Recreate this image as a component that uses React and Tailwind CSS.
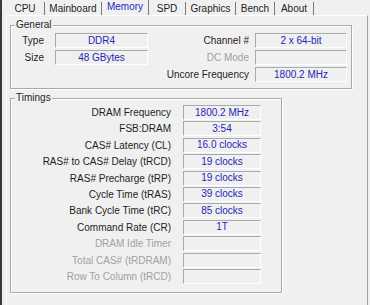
const tabs = [
  { name: "CPU", w: "w-[39px]" },
  { name: "Mainboard", w: "w-[57px]" },
  { name: "Memory", w: "w-[47px]", active: true },
  { name: "SPD", w: "w-[37px]" },
  { name: "Graphics", w: "w-[50px]" },
  { name: "Bench", w: "w-[39px]" },
  { name: "About", w: "w-[39px]" },
];

const timings = [
  ["DRAM Frequency", "1800.2 MHz"],
  ["FSB:DRAM", "3:54"],
  ["CAS# Latency (CL)", "16.0 clocks"],
  ["RAS# to CAS# Delay (tRCD)", "19 clocks"],
  ["RAS# Precharge (tRP)", "19 clocks"],
  ["Cycle Time (tRAS)", "39 clocks"],
  ["Bank Cycle Time (tRC)", "85 clocks"],
  ["Command Rate (CR)", "1T"],
  ["DRAM Idle Timer", null],
  ["Total CAS# (tRDRAM)", null],
  ["Row To Column (tRCD)", null],
];

function ValueBox({ value, className = "" }) {
  return (
    <div
      className={
        "h-[15px] flex items-center justify-center border border-t-[#a9a9a9] border-l-[#a9a9a9] border-b-white border-r-white bg-[#f0f0f0] text-[#2626b4] leading-none " +
        className
      }
    >
      {value}
    </div>
  );
}

function Group({ title, className = "", children }) {
  return (
    <fieldset
      className={
        "border border-[#a9a9a9] shadow-[inset_1px_1px_0_#ffffff,1px_1px_0_#ffffff] " +
        className
      }
    >
      <legend className="ml-[4px] px-[1px] leading-[12px] bg-[#f0f0f0] text-[#1e1e1e]">
        {title}
      </legend>
      {children}
    </fieldset>
  );
}

export default function App() {
  return (
    <div className="w-[370px] h-[305px] bg-[#f0f0f0] flex overflow-hidden font-['Liberation_Sans',Arial,sans-serif] text-[10px] leading-[15px] text-[#1e1e1e]">
      <div className="w-[2px] bg-[#3a3a3a]" />
      <div className="flex-1 flex flex-col pl-[4px] pr-[2px]">
        <div className="h-[15px] flex items-end">
          {tabs.map((tab) => (
            <div
              key={tab.name}
              className={
                "flex items-center justify-center border-r border-r-[#7a7a7a] leading-none " +
                tab.w +
                (tab.active
                  ? " h-[15px] pb-[1px] text-[#2a2ac0]"
                  : " h-[13px] pt-[1px]")
              }
            >
              {tab.name}
            </div>
          ))}
        </div>

        <div className="flex-1 border-l border-t border-r border-l-white border-t-white border-r-[#a0a0a0] pl-[3px]">
          <Group title="General" className="mt-[3px] w-[342px] pt-[2px] pb-[6px] pr-[4px]">
            <div className="grid grid-cols-[33px_104px_1fr_92px] auto-rows-[15px] gap-y-[2px] items-center">
              <span className="text-right">Type</span>
              <ValueBox value="DDR4" className="ml-[11px] w-[93px]" />
              <span className="text-right pr-[6px]">Channel #</span>
              <ValueBox value="2 x 64-bit" />

              <span className="text-right">Size</span>
              <ValueBox value="48 GBytes" className="ml-[11px] w-[93px]" />
              <span className="text-right pr-[6px] text-[#a0a0a0]">DC Mode</span>
              <ValueBox value="" />

              <span />
              <span />
              <span className="text-right pr-[6px]">Uncore Frequency</span>
              <ValueBox value="1800.2 MHz" />
            </div>
          </Group>

          <Group title="Timings" className="mt-[3px] w-[272px] pt-[1px] pb-[8px]">
            <div className="flex flex-col gap-y-[1.4px]">
              {timings.map(([label, value]) => (
                <div key={label} className="flex items-center h-[15px]">
                  <span
                    className={
                      "w-[160px] text-right " + (value === null ? "text-[#a0a0a0]" : "")
                    }
                  >
                    {label}
                  </span>
                  <ValueBox value={value} className="ml-[12px] w-[78px]" />
                </div>
              ))}
            </div>
          </Group>
        </div>
      </div>
    </div>
  );
}
